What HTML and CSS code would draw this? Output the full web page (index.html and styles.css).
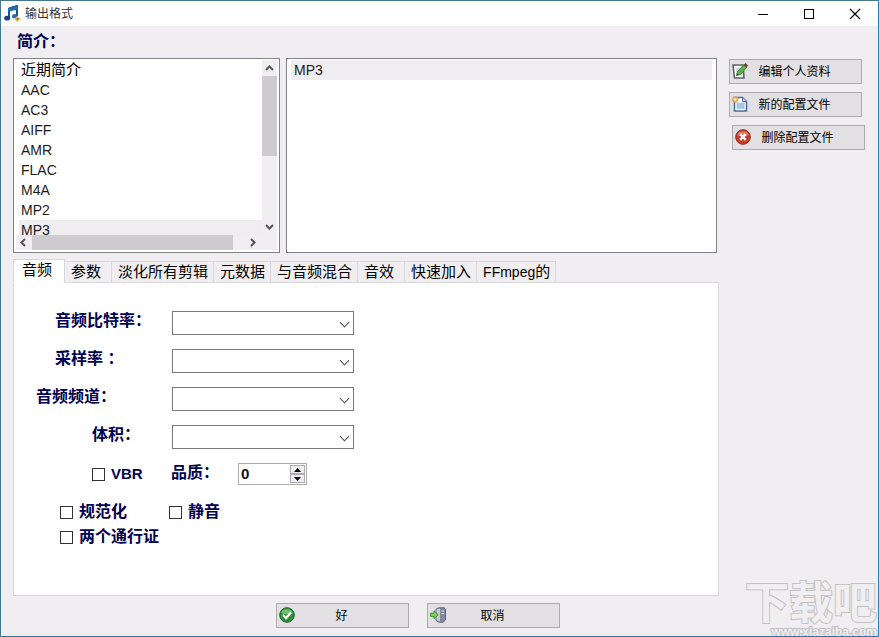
FILE: index.html
```
<!DOCTYPE html>
<html lang="zh-CN">
<head>
  <meta charset="utf-8">
  <title>输出格式</title>
  <link rel="stylesheet" href="styles.css">
</head>
<body>
  <div class="window">
    <header class="titlebar">
      <svg class="app-icon" width="17" height="17" viewBox="0 0 17 17">
        <path d="M5 3.5 L13 1 V11 M5 3.5 V13" fill="none" stroke="#1d4f8c" stroke-width="2"/>
        <path d="M4 3 L14 0.5 V4.5 L4 6.7 Z" fill="#2d6cab"/>
        <ellipse cx="3.2" cy="13.2" rx="3" ry="2.4" fill="#17467f"/>
        <ellipse cx="10.8" cy="11.2" rx="2.8" ry="2.2" fill="#2b69a8"/>
        <path d="M13.5 11 L17 14 L13.5 17 L10 14 Z" fill="#dcc56c"/>
        <circle cx="13.5" cy="14" r="1" fill="#7c6420"/>
      </svg>
      <h1 class="title">输出格式</h1>
      <div class="window-controls">
        <button type="button" aria-label="最小化"><svg width="12" height="12"><path d="M1 6.5 H11" stroke="#000"/></svg></button>
        <button type="button" aria-label="最大化"><svg width="12" height="12"><rect x="1.5" y="1.5" width="9" height="9" fill="none" stroke="#000"/></svg></button>
        <button type="button" aria-label="关闭"><svg width="12" height="12"><path d="M1 1 L11 11 M11 1 L1 11" stroke="#000" stroke-width="1.2"/></svg></button>
      </div>
    </header>

    <div class="content">
      <main class="main">
        <h2 class="section-label">简介：</h2>
        <div class="lists">
          <div class="listbox categories">
            <ul role="listbox" aria-label="简介">
              <li class="cjk" role="option">近期简介</li>
              <li role="option">AAC</li>
              <li role="option">AC3</li>
              <li role="option">AIFF</li>
              <li role="option">AMR</li>
              <li role="option">FLAC</li>
              <li role="option">M4A</li>
              <li role="option">MP2</li>
              <li class="selected" role="option" aria-selected="true">MP3</li>
            </ul>
            <div class="scroll-v">
              <svg width="15" height="16"><path d="M4 10 L7.5 6.5 L11 10" fill="none" stroke="#555" stroke-width="2"/></svg>
              <div class="thumb"></div>
              <svg width="15" height="16"><path d="M4 6 L7.5 9.5 L11 6" fill="none" stroke="#555" stroke-width="2"/></svg>
            </div>
            <div class="scroll-h">
              <svg width="16" height="15"><path d="M9 4 L5.5 7.5 L9 11" fill="none" stroke="#555" stroke-width="2"/></svg>
              <div class="thumb"></div>
              <svg width="16" height="15"><path d="M6 4 L9.5 7.5 L6 11" fill="none" stroke="#555" stroke-width="2"/></svg>
            </div>
          </div>
          <div class="listbox profiles">
            <ul role="listbox" aria-label="配置文件">
              <li class="selected" role="option" aria-selected="true">MP3</li>
            </ul>
          </div>
        </div>

        <div class="tabs" role="tablist">
          <button type="button" class="tab active" role="tab" aria-selected="true">音频</button>
          <button type="button" class="tab" role="tab">参数</button>
          <button type="button" class="tab" role="tab">淡化所有剪辑</button>
          <button type="button" class="tab" role="tab">元数据</button>
          <button type="button" class="tab" role="tab">与音频混合</button>
          <button type="button" class="tab" role="tab">音效</button>
          <button type="button" class="tab" role="tab">快速加入</button>
          <button type="button" class="tab" role="tab"><span class="latin">FFmpeg</span>的</button>
        </div>

        <form class="panel" id="audio-form">
          <div class="row">
            <label class="indent-m" for="bitrate">音频比特率：</label>
            <span class="select"><select id="bitrate"><option></option></select></span>
          </div>
          <div class="row">
            <label class="indent-m" for="samplerate">采样率 ：</label>
            <span class="select"><select id="samplerate"><option></option></select></span>
          </div>
          <div class="row">
            <label class="indent-s" for="channels">音频频道：</label>
            <span class="select"><select id="channels"><option></option></select></span>
          </div>
          <div class="row">
            <label class="indent-l" for="volume">体积：</label>
            <span class="select"><select id="volume"><option></option></select></span>
          </div>
          <div class="quality">
            <label class="check indent-l"><input type="checkbox" name="vbr"><span class="vbr">VBR</span></label>
            <label class="quality-label" for="quality">品质：</label>
            <div class="spinner">
              <input type="number" id="quality" value="0">
              <div class="spinner-buttons">
                <button type="button" aria-label="增加"><svg width="7" height="4"><path d="M0 4 L3.5 0 L7 4 Z"/></svg></button>
                <button type="button" aria-label="减少"><svg width="7" height="4"><path d="M0 0 L3.5 4 L7 0 Z"/></svg></button>
              </div>
            </div>
          </div>
          <div class="checks">
            <label class="check"><input type="checkbox" name="normalize">规范化</label>
            <label class="check"><input type="checkbox" name="mute">静音</label>
            <label class="check"><input type="checkbox" name="twopass">两个通行证</label>
          </div>
        </form>
      </main>

      <aside class="actions">
        <button type="button" class="button">
          <svg width="16" height="16" viewBox="0 0 16 16">
            <path d="M1 2 H11 L12 15 H2.5 Z" fill="#f4f7f4" stroke="#5b6570" stroke-width="1.6"/>
            <path d="M4 6 H8 M4 8 H7" stroke="#b4bcc4"/>
            <path d="M4.5 12.5 L5.5 8.5 L12 1.5 L15 4 L8.5 11.5 Z" fill="#56b547" stroke="#2c7a2c" stroke-width=".8"/>
            <path d="M11.5 2 L13.5 0 L16 2.5 L14.5 4.5 Z" fill="#7b3b2c"/>
            <path d="M4.5 12.5 L5 10.5 L6.5 11.8 Z" fill="#333"/>
          </svg>
          <span>编辑个人资料</span>
        </button>
        <button type="button" class="button">
          <svg width="16" height="16" viewBox="0 0 16 16">
            <path d="M2.5 1.5 H10.5 L14.5 5.5 V15 H2.5 Z" fill="#fff" stroke="#4b6c9a" stroke-width="1.5"/>
            <path d="M10.5 1.5 V5.5 H14.5" fill="#cfdcec" stroke="#4b6c9a"/>
            <path d="M4.5 6.5 H12.5 V13 H4.5 Z" fill="#a9c4e6"/>
            <circle cx="3.2" cy="3.5" r="2.8" fill="#f3bd78" stroke="#d58a3c" stroke-width=".8"/>
            <circle cx="3.2" cy="3.5" r="1" fill="#fff4d8"/>
          </svg>
          <span>新的配置文件</span>
        </button>
        <button type="button" class="button last">
          <svg width="16" height="16" viewBox="0 0 16 16">
            <circle cx="8" cy="8" r="7.3" fill="#cc3a28" stroke="#8d2a20"/>
            <path d="M2.2 6 A6 5 0 0 1 13.8 6 Q8 8.5 2.2 6" fill="#e57a62"/>
            <path d="M5.2 5.2 L10.8 10.8 M10.8 5.2 L5.2 10.8" stroke="#fff" stroke-width="2.4"/>
          </svg>
          <span>删除配置文件</span>
        </button>
      </aside>
    </div>

    <footer class="footer">
      <button type="submit" form="audio-form" class="button">
        <svg width="16" height="16" viewBox="0 0 16 16">
          <circle cx="8" cy="8" r="7.3" fill="#2c8f36" stroke="#1f6629"/>
          <path d="M2.2 6 A6 5 0 0 1 13.8 6 Q8 8.5 2.2 6" fill="#6fbf6c"/>
          <path d="M4 8 L7 11 L12 5.5" fill="none" stroke="#fff" stroke-width="2.3"/>
        </svg>
        <span>好</span>
      </button>
      <button type="button" class="button">
        <svg width="16" height="16" viewBox="0 0 16 16">
          <path d="M6 2 L9 .7 H14 L15.5 2 V13 L13 15.3 H9 L6 13.5 Z" fill="#85879c" stroke="#55566c" stroke-width=".8"/>
          <path d="M6.5 2.5 L10 1.5 V14.5 L6.5 13 Z" fill="#c9cad8"/>
          <path d="M11.5 4 H14 M11.5 6.5 H14" stroke="#dfe0ea"/>
          <path d="M.5 6.2 H4 V3.8 L8.2 7.8 L4 11.8 V9.4 H.5 Z" fill="#7fd35c" stroke="#2f8a2c" stroke-width=".9"/>
        </svg>
        <span>取消</span>
      </button>
    </footer>

    <div class="watermark">
      <div class="watermark-name">下载吧</div>
      <div class="watermark-url">www.xiazaiba.com</div>
    </div>
  </div>
</body>
</html>
```

FILE: styles.css
```
* {
  box-sizing: border-box;
}

body {
  margin: 0;
  font-family: "Liberation Sans", "Noto Sans CJK SC", sans-serif;
  color: #000;
}

button,
input,
select {
  font-family: inherit;
  color: inherit;
}

.window {
  position: relative;
  display: flex;
  flex-direction: column;
  min-height: 100vh;
  overflow: hidden;
  background-color: #f0eef1;
  border: 1px solid;
  border-color: #44788f #1a84c4 #2b73b3 #44788f;
}

/* title bar */
.titlebar {
  display: flex;
  align-items: center;
  height: 25px;
  padding-left: 3px;
  background-color: #fff;
}

.title {
  flex: 1;
  margin: 0 0 0 4px;
  font-size: 12px;
  font-weight: normal;
  line-height: 16px;
  color: #333;
}

.window-controls {
  display: flex;
}

.window-controls button {
  display: flex;
  align-items: center;
  justify-content: center;
  width: 46px;
  height: 24px;
  padding: 0;
  border: none;
  background: none;
}

/* content */
.content {
  flex: 1;
  display: flex;
  gap: 10px;
  padding: 6px 13px 0 12px;
}

.main {
  flex: 1;
  display: flex;
  flex-direction: column;
}

.section-label {
  margin: 0 0 6px 4px;
  font-size: 16px;
  line-height: 20px;
  color: #000050;
}

.lists {
  display: flex;
  gap: 6px;
  height: 195px;
  margin: 0 2px 6px 0;
}

.listbox {
  background-color: #fff;
  border: 1px solid #80828c;
}

.listbox ul {
  margin: 0;
  padding: 0;
  overflow: hidden;
  list-style: none;
  font-size: 14px;
  line-height: 20px;
  color: #1c1c1c;
}

.listbox li {
  padding-left: 2px;
}

.listbox .cjk {
  font-size: 15px;
  color: #000;
}

.listbox .selected {
  background-color: #efedf0;
}

.categories {
  display: grid;
  grid-template-columns: 1fr 15px;
  grid-template-rows: 1fr 15px;
  width: 267px;
  padding: 1px 2px 2px;
}

.categories ul {
  min-height: 0;
  padding-left: 3px;
}

.profiles {
  flex: 1;
  padding: 1px 4px;
}

.profiles li {
  padding-left: 3px;
}

.scroll-v,
.scroll-h {
  display: flex;
  background-color: #f0eef1;
}

.scroll-v {
  flex-direction: column;
  justify-content: space-between;
}

.scroll-v .thumb {
  height: 80px;
  margin-bottom: auto;
}

.scroll-h {
  grid-column: 1 / 3;
  padding-right: 16px;
}

.scroll-h .thumb {
  flex: 1;
  margin-right: 12px;
}

.thumb {
  background-color: #cdcbce;
}

/* tabs */
.tabs {
  position: relative;
  display: flex;
  align-items: flex-end;
  height: 24px;
  margin-bottom: -1px;
}

.tab {
  min-width: 47px;
  height: 22px;
  padding: 0 5px 0 6px;
  border: 1px solid #d9d7da;
  border-left: none;
  background-color: #f0eef1;
  font-size: 15px;
  line-height: 20px;
  text-align: left;
  white-space: nowrap;
}

.tab.active {
  height: 24px;
  padding: 0 12px 2px 8px;
  border-left: 1px solid #d9d7da;
  border-bottom-color: #fff;
  background-color: #fff;
}

.latin {
  font-size: 14px;
}

.panel {
  flex: 1;
  padding: 28px 20px 20px 0;
  border: 1px solid #d9d7da;
  background-color: #fff;
  font-size: 16px;
  font-weight: bold;
  line-height: 20px;
  color: #000050;
}

.row {
  display: flex;
  margin-bottom: 14px;
}

.row label {
  width: 158px;
}

.indent-s {
  padding-left: 22px;
}

.indent-m {
  padding-left: 41px;
}

.indent-l {
  padding-left: 78px;
}

.select {
  position: relative;
  width: 182px;
  height: 24px;
}

.select select {
  width: 100%;
  height: 100%;
  padding: 0 20px 0 4px;
  appearance: none;
  border: 1px solid #7a7a7a;
  border-radius: 0;
  background-color: #fff;
}

.select::after {
  content: "";
  position: absolute;
  top: 8px;
  right: 6px;
  width: 6px;
  height: 6px;
  border: solid #555;
  border-width: 0 1px 1px 0;
  transform: rotate(45deg);
  pointer-events: none;
}

.check {
  display: flex;
  align-items: center;
  gap: 6px;
}

.check input {
  width: 13px;
  height: 13px;
  margin: 0;
  appearance: none;
  border: 1px solid #333;
  background-color: #fff;
}

.check input:checked {
  background-color: #000050;
}

.vbr {
  font-size: 15px;
}

.quality {
  display: flex;
  margin-bottom: 17px;
}

.quality .check {
  width: 157px;
}

.quality-label {
  width: 67px;
}

.spinner {
  display: flex;
  width: 69px;
  height: 22px;
  padding: 1px;
  border: 1px solid #abadb3;
}

.spinner input {
  flex: 1;
  min-width: 0;
  padding: 0 1px 2px;
  border: none;
  appearance: textfield;
  background: none;
  font-size: 15px;
  font-weight: bold;
  color: #111;
}

.spinner input::-webkit-inner-spin-button {
  appearance: none;
}

.spinner-buttons {
  display: flex;
  flex-direction: column;
}

.spinner-buttons button {
  flex: 1;
  display: flex;
  align-items: center;
  justify-content: center;
  width: 15px;
  padding: 0;
  border: 1px solid #acacac;
  background-color: #f0eef1;
}

.checks {
  display: grid;
  grid-template-columns: 109px 1fr;
  row-gap: 5px;
  padding-left: 46px;
}

.checks .check {
  white-space: nowrap;
}

/* buttons */
.actions {
  display: flex;
  flex-direction: column;
  align-items: flex-start;
  gap: 8px;
  width: 136px;
  padding-top: 27px;
}

.button {
  display: flex;
  align-items: center;
  width: 133px;
  height: 25px;
  padding: 0 20px 2px 2px;
  border: 1px solid #adabae;
  background-color: #e2e0e3;
  font-size: 12px;
}

.button svg {
  flex-shrink: 0;
}

.button span {
  flex: 1;
  text-align: center;
}

.button.last {
  align-self: flex-end;
}

.footer {
  display: flex;
  justify-content: center;
  gap: 18px;
  padding: 7px 43px 8px 0;
}

.watermark {
  position: absolute;
  right: 1px;
  bottom: -2px;
  font-weight: bold;
  color: #f0eef1;
  text-align: right;
  -webkit-text-stroke: 2px #c4c2c5;
  paint-order: stroke fill;
  pointer-events: none;
}

.watermark-name {
  font-size: 44px;
  line-height: 44px;
}

.watermark-url {
  font-size: 12px;
  line-height: 12px;
}
```
